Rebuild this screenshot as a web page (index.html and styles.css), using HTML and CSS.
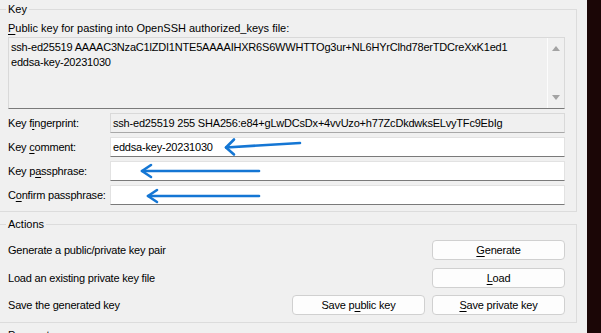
FILE: index.html
```html
<!DOCTYPE html>
<html>
<head>
<meta charset="utf-8">
<link rel="stylesheet" href="styles.css">
</head>
<body>
<div class="screen">
  <div class="main">
    <fieldset class="group key-group">
      <legend class="legend">Key</legend>
      <div class="caption"><u>P</u>ublic key for pasting into OpenSSH authorized_keys file:</div>
      <div class="pubkey">
        <div class="pubkey-text">ssh-ed25519 AAAAC3NzaC1lZDI1NTE5AAAAIHXR6S6WWHTTOg3ur+NL6HYrClhd78erTDCreXxK1ed1<br>eddsa-key-20231030</div>
        <div class="vscroll">
          <span class="tri tri-up"></span>
          <span class="tri tri-down"></span>
        </div>
      </div>
      <div class="rows">
        <div class="row"><span class="label">Key f<u>i</u>ngerprint:</span><div class="field readonly">ssh-ed25519 255 SHA256:e84+gLwDCsDx+4vvUzo+h77ZcDkdwksELvyTFc9EbIg</div></div>
        <div class="row"><span class="label">Key <u>c</u>omment:</span><div class="field">eddsa-key-20231030</div></div>
        <div class="row"><span class="label">Key p<u>a</u>ssphrase:</span><div class="field"></div></div>
        <div class="row"><span class="label">C<u>o</u>nfirm passphrase:</span><div class="field"></div></div>
      </div>
    </fieldset>
    <fieldset class="group actions-group">
      <legend class="legend">Actions</legend>
      <div class="action-row">
        <span class="action-label">Generate a public/private key pair</span>
        <button class="btn"><u>G</u>enerate</button>
      </div>
      <div class="action-row">
        <span class="action-label">Load an existing private key file</span>
        <button class="btn"><u>L</u>oad</button>
      </div>
      <div class="action-row">
        <span class="action-label">Save the generated key</span>
        <div class="btn-pair">
          <button class="btn">Save p<u>u</u>blic key</button>
          <button class="btn"><u>S</u>ave private key</button>
        </div>
      </div>
    </fieldset>
    <fieldset class="group params-group">
      <legend class="legend">Parameters</legend>
    </fieldset>
  </div>
  <div class="dark"></div>
  <svg class="arrows" width="601" height="333" viewBox="0 0 601 333">
    <g fill="none" stroke="#1476d4" stroke-width="2.6" stroke-linecap="round" stroke-linejoin="round">
      <path d="M300 143 L226 147.5"/>
      <path d="M234 139.5 L226 147.5 L234 154.5"/>
      <path d="M259 171 L142 171"/>
      <path d="M151 165 L142 171 L151 177"/>
      <path d="M259 196 L148 196"/>
      <path d="M157 190 L148 196 L157 202"/>
    </g>
  </svg>
</div>
</body>
</html>
```
FILE: styles.css
```css
* { box-sizing: border-box; }
html, body {
  margin: 0;
  padding: 0;
  background: #f0f0f0;
}
body {
  font-family: "Liberation Sans", Arial, sans-serif;
  font-size: 11px;
  letter-spacing: -0.2px;
  color: #000;
  width: 601px;
  height: 333px;
  overflow: hidden;
}
u { text-decoration-thickness: 1px; text-underline-offset: 2px; }
.screen {
  position: relative;
  display: flex;
  width: 601px;
  height: 333px;
  overflow: hidden;
}
.main {
  width: 587px;
  padding-top: 2px;
}
.dark {
  flex: 1;
  background: #1b0606;
}
.group {
  margin: 0;
  width: 577px;
  border: 1px solid #dcdcdc;
  border-left: 0;
  padding: 0 11px 0 8px;
  min-width: 0;
}
.legend {
  margin-left: -2px;
  padding: 0 2px;
  line-height: 15px;
  height: 15px;
  letter-spacing: 0;
}
.caption {
  line-height: 15px;
  margin-top: 4px;
  letter-spacing: 0;
}
.pubkey {
  margin-top: 1px;
  height: 72px;
  width: 557px;
  border: 1px solid #d9d9d9;
  border-bottom-color: #7a7a7a;
  background: #f0f0f0;
  display: flex;
}
.pubkey-text {
  flex: 1;
  padding: 2px 0 0 2px;
  line-height: 15px;
  white-space: nowrap;
  overflow: hidden;
}
.vscroll {
  width: 17px;
  border-left: 1px solid #fcfcfc;
  display: flex;
  flex-direction: column;
  justify-content: space-between;
  align-items: center;
  padding: 8px 0 8px 0;
}
.tri {
  width: 0;
  height: 0;
  border-left: 4px solid transparent;
  border-right: 4px solid transparent;
}
.tri-up { border-bottom: 5px solid #a3a3a3; }
.tri-down { border-top: 5px solid #a3a3a3; }
.rows {
  margin-top: 4px;
  display: flex;
  flex-direction: column;
  gap: 4px;
  padding-bottom: 6px;
}
.row {
  display: flex;
  align-items: center;
  height: 20px;
}
.label {
  flex: none;
  width: 102px;
  white-space: nowrap;
}
.field {
  width: 456px;
  height: 20px;
  border: 1px solid #e2e2e2;
  border-bottom-color: #7a7a7a;
  background: #fff;
  padding: 0 2px;
  line-height: 18px;
  white-space: nowrap;
  overflow: hidden;
}
.field.readonly {
  background: #f0f0f0;
  border-color: #d9d9d9;
  border-bottom-color: #a8a8a8;
}
.actions-group {
  margin-top: 5px;
  padding-top: 8px;
  padding-bottom: 7px;
}
.action-row {
  display: flex;
  justify-content: space-between;
  align-items: center;
  height: 20px;
  margin-bottom: 7px;
}
.action-row:first-of-type { margin-bottom: 8px; }
.action-row:last-child { margin-bottom: 0; }
.btn-pair {
  display: flex;
  gap: 7px;
}
.btn {
  width: 133px;
  height: 20px;
  font: inherit;
  letter-spacing: inherit;
  color: #000;
  background: #fdfdfd;
  border: 1px solid #d0d0d0;
  border-radius: 4px;
  padding: 0;
  line-height: 18px;
}
.params-group {
  margin-top: 5px;
  height: 20px;
}
.arrows {
  position: absolute;
  left: 0;
  top: 0;
  pointer-events: none;
}
```
